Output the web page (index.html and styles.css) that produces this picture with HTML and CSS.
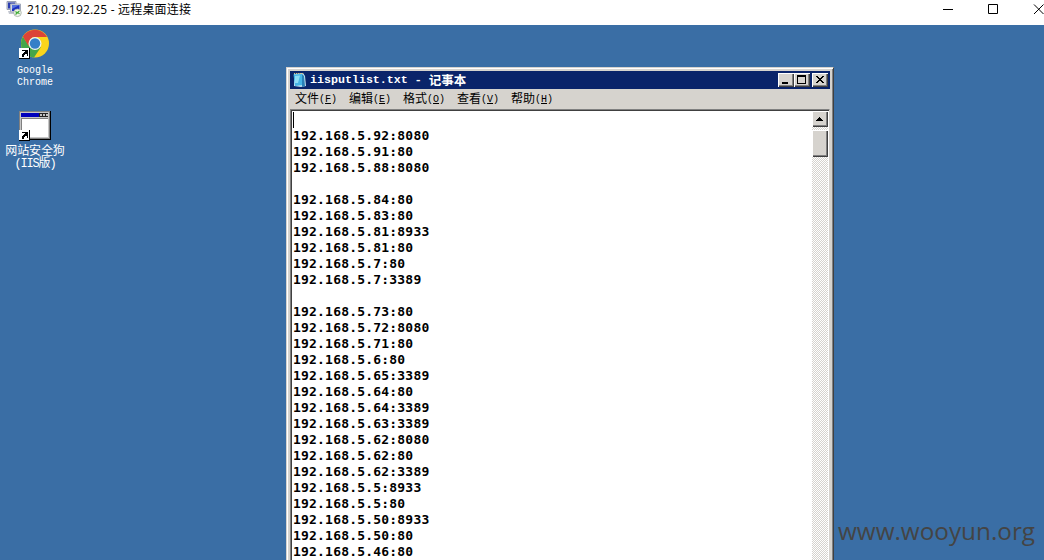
FILE: index.html
```html
<!DOCTYPE html>
<html lang="zh-CN">
<head>
<meta charset="utf-8">
<title>远程桌面连接</title>
<link rel="stylesheet" href="styles.css">
</head>
<body>
<header class="host-bar">
  <svg class="host-icon" width="16" height="18" viewBox="0 0 16 18">
    <path d="M1 1.500h9v8H1z" fill="#c9cedb" stroke="#9aa1b4"/>
    <path d="M2 2.500h7v6H2z" fill="#2a3cb0"/>
    <path d="M2 11h6v3H3z" fill="#c3c7d0"/>
    <path d="M4.500 4h10v8h-10z" fill="#d3d8e4" stroke="#a2a9bb"/>
    <path d="M6 5h7.500v6H6z" fill="#1c2fc0"/>
    <path d="M6 5h7.500L6 9z" fill="#5573de"/>
    <circle cx="11.500" cy="12.800" r="3.800" fill="#eef3e9" stroke="#a3aca3" stroke-width="0.800"/>
    <path d="M9.500 11.500l1.800 1.500-1.800 1.500M13.500 10.800l-1.800 1.500 1.800 1.500" fill="none" stroke="#3caa32" stroke-width="1.100"/>
  </svg>
  <span class="host-title">210.29.192.25 - 远程桌面连接</span>
  <svg class="host-controls" width="102" height="25" viewBox="0 0 102 25" fill="none" stroke="#000">
    <path d="M1 9.500h10M46.500 4.500h9v9h-9z"/>
    <path d="M92 4.500l9.500 9.500M101.500 4.500L92 14"/>
  </svg>
</header>
<main class="desktop">
  <div class="shortcuts">
    <div class="shortcut chrome">
      <svg width="32" height="32" viewBox="0 0 32 32">
        <circle cx="16" cy="15.500" r="14" fill="#fbd51c"/>
        <path d="M3.900 8.500A14 14 0 0 0 15 29.500L22 19 16 21 10 18z" fill="#45a64a"/>
        <path d="M3.900 8.500A14 14 0 0 1 28.100 9H16Q10 9 9.500 18z" fill="#dc4437"/>
        <circle cx="16" cy="15.500" r="6.500" fill="#eef3f3"/>
        <circle cx="16" cy="15.500" r="5.200" fill="#347fc8"/>
        <g shape-rendering="crispEdges">
          <path d="M0 20h11v11H0z"/><path d="M0 20h10v10H0z" fill="#fff"/>
          <path d="M3 22h6v6H8v-2H6v1H5v2H3v-3h1v-1h1v-1h1v-1H3z"/>
        </g>
      </svg>
      <span>Google</span><span>Chrome</span>
    </div>
    <div class="shortcut safedog">
      <svg width="32" height="30" viewBox="0 0 32 30" shape-rendering="crispEdges">
        <path d="M0 0h32v29H2v-2H0z" fill="#000"/>
        <path d="M0 0h31v28H0z" fill="#808080"/>
        <path d="M1 1h29v26H1z" fill="#c6c6c6"/>
        <path d="M2 2h27v4H2z" fill="#0000bc"/>
        <path d="M20 2h9v4h-9z" fill="#222"/>
        <path d="M21 3h2v2h-2zM24 3h2v2h-2zM27 3h2v2h-2z" fill="#c0c0c0"/>
        <path d="M2 7h27v19H2z" fill="#808080"/>
        <path d="M3 8h26v18H3z" fill="#fff"/>
        <path d="M0 19h11v11H0z" fill="#000"/>
        <path d="M0 19h10v10H0z" fill="#fff"/>
        <path d="M3 21h6v6H8v-2H6v1H5v2H3v-3h1v-1h1v-1h1v-1H3z" fill="#000"/>
      </svg>
      <span>网站安全狗</span><span>(IIS版)</span>
    </div>
  </div>

  <section class="notepad">
    <div class="title-bar">
      <svg width="16" height="16" viewBox="0 0 16 16">
        <path d="M2 2l9-1 2 3 1 10-5 1-7-1z" fill="#c3e4f1"/>
        <path d="M1.500 2.500L10 2l1 11-8 1z" fill="#45b4e6"/>
        <path d="M3 4l5-.5L6 11H3z" fill="#8edcf5"/>
        <path d="M10 2l2 2 1 10-3 1z" fill="#2a80b8"/>
        <path d="M2 1.500h9" stroke="#dcc07f" stroke-dasharray="1 1"/>
      </svg>
      <span class="title-latin">iisputlist.txt - </span><span class="title-cjk">记事本</span>
      <div class="buttons">
        <svg width="16" height="14" viewBox="0 0 16 14"><path d="M4 9h6v2H4z"/></svg>
        <svg width="16" height="14" viewBox="0 0 16 14"><path d="M3 2h9v9H3zM4 4v6h7V4z" fill-rule="evenodd"/></svg>
        <svg class="close" width="16" height="14" viewBox="0 0 16 14"><path d="M4 3h2v1h1v1h2V4h1V3h2v1h-1v1h-1v1H9v1h1v1h1v1h1v1h-2V9H9V8H7v1H6v1H4V9h1V8h1V7h1V6H6V5H5V4H4z"/></svg>
      </div>
    </div>
    <nav class="menu">
      <span>文件<i>(<u>F</u>)</i></span><span>编辑<i>(<u>E</u>)</i></span><span>格式<i>(<u>O</u>)</i></span><span>查看<i>(<u>V</u>)</i></span><span>帮助<i>(<u>H</u>)</i></span>
    </nav>
    <div class="editor">
<pre class="text"><span class="caret"></span>
192.168.5.92:8080
192.168.5.91:80
192.168.5.88:8080

192.168.5.84:80
192.168.5.83:80
192.168.5.81:8933
192.168.5.81:80
192.168.5.7:80
192.168.5.7:3389

192.168.5.73:80
192.168.5.72:8080
192.168.5.71:80
192.168.5.6:80
192.168.5.65:3389
192.168.5.64:80
192.168.5.64:3389
192.168.5.63:3389
192.168.5.62:8080
192.168.5.62:80
192.168.5.62:3389
192.168.5.5:8933
192.168.5.5:80
192.168.5.50:8933
192.168.5.50:80
192.168.5.46:80</pre>
      <div class="scrollbar">
        <svg class="arrow" width="16" height="16" viewBox="0 0 16 16"><path d="M7 6h1v1h1v1h1v1h1v1H4V9h1V8h1V7h1z"/></svg>
        <div class="thumb"></div>
      </div>
    </div>
  </section>
  <div class="watermark">www.wooyun.org</div>
</main>
</body>
</html>
```

FILE: styles.css
```css
* { box-sizing: border-box; }
body {
  margin: 0;
  width: 1044px;
  height: 560px;
  overflow: hidden;
  display: flex;
  flex-direction: column;
  background: #fff;
  font-family: "Liberation Sans", "Noto Sans CJK SC", sans-serif;
}
svg { display: block; flex: none; }
.host-bar {
  height: 25px;
  flex: none;
  display: flex;
  align-items: flex-start;
  padding-left: 6px;
}
.host-title {
  margin-left: 5px;
  font: 12px/18px "Open Sans", "Noto Sans CJK SC", sans-serif;
  letter-spacing: 0.18px;
  padding-top: 1px;
  white-space: nowrap;
}
.host-controls { margin-left: auto; }
.desktop {
  position: relative;
  flex: 1;
  overflow: hidden;
  background: #3a6ea5;
}
.shortcuts { width: 70px; padding-top: 3px; }
.shortcut {
  display: flex;
  flex-direction: column;
  align-items: center;
  color: #fff;
  font: 10px/12px "Liberation Mono", "Noto Sans CJK SC", monospace;
}
.chrome svg { margin-bottom: 5px; }
.safedog { margin-top: 22px; font-size: 12px; letter-spacing: -0.1px; }
.safedog svg { margin-bottom: 5px; }
.safedog span:last-child { letter-spacing: -1.2px; }

.notepad {
  position: absolute;
  left: 286px;
  top: 42px;
  width: 548px;
  height: 520px;
  display: flex;
  flex-direction: column;
  padding: 2px 3px 0 2px;
  background: #d6d3ce;
  border: 1px solid #d6d3ce;
  border-right-color: #404040;
  box-shadow: inset 1px 1px #fff, inset -1px 0 #808080;
}
.title-bar {
  height: 18px;
  flex: none;
  display: flex;
  align-items: center;
  margin: 1px 0 0 1px;
  padding: 0 2px;
  background: #0a246a;
  color: #fff;
  font-weight: bold;
  white-space: pre;
}
.title-latin { margin-left: 2px; font: bold 11.650px/18px "Liberation Mono", monospace; }
.title-cjk { font: bold 12.500px/18px "Noto Sans CJK SC", sans-serif; }
.buttons { display: flex; margin-left: auto; }
.buttons svg, .arrow, .thumb {
  background: #d6d3ce;
  box-shadow: inset 1px 1px #fff, inset -1px -1px #404040, inset -2px -2px #808080;
}
.buttons .close { margin-left: 2px; }
.menu {
  height: 20px;
  flex: none;
  display: flex;
  gap: 12px;
  padding: 0 0 0 6px;
  font: 12px/18px "Noto Sans CJK SC", sans-serif;
  white-space: nowrap;
}
.menu span { width: 42px; }
.menu i { font: 10px/16px "Liberation Mono", monospace; vertical-align: 1px; }
.menu u { text-underline-offset: 1px; }
.editor {
  flex: 1;
  min-height: 0;
  display: flex;
  margin-left: 1px;
  padding-right: 1px;
  background: #fff;
  border: 1px solid #808080;
  border-width: 1px 1px 0 1px;
  border-right-color: #d6d3ce;
  box-shadow: inset 1px 1px #404040;
}
.text {
  flex: 1;
  margin: 0;
  padding: 2px 0 0 2px;
  color: #000;
  font: bold 13px/16px "DejaVu Sans Mono", monospace;
  letter-spacing: 0.2px;
}
.caret {
  display: inline-block;
  width: 1px;
  height: 16px;
  vertical-align: top;
  background: #000;
}
.scrollbar {
  width: 16px;
  margin-top: 1px;
  background: repeating-conic-gradient(#fff 0 25%, #d6d3ce 0 50%) 0 0 / 2px 2px;
}
.thumb { height: 27px; margin-top: 3px; }
.watermark {
  position: absolute;
  left: 838px;
  top: 489px;
  color: #444;
  font: 24.300px/34px "Open Sans", sans-serif;
  white-space: nowrap;
}
```
